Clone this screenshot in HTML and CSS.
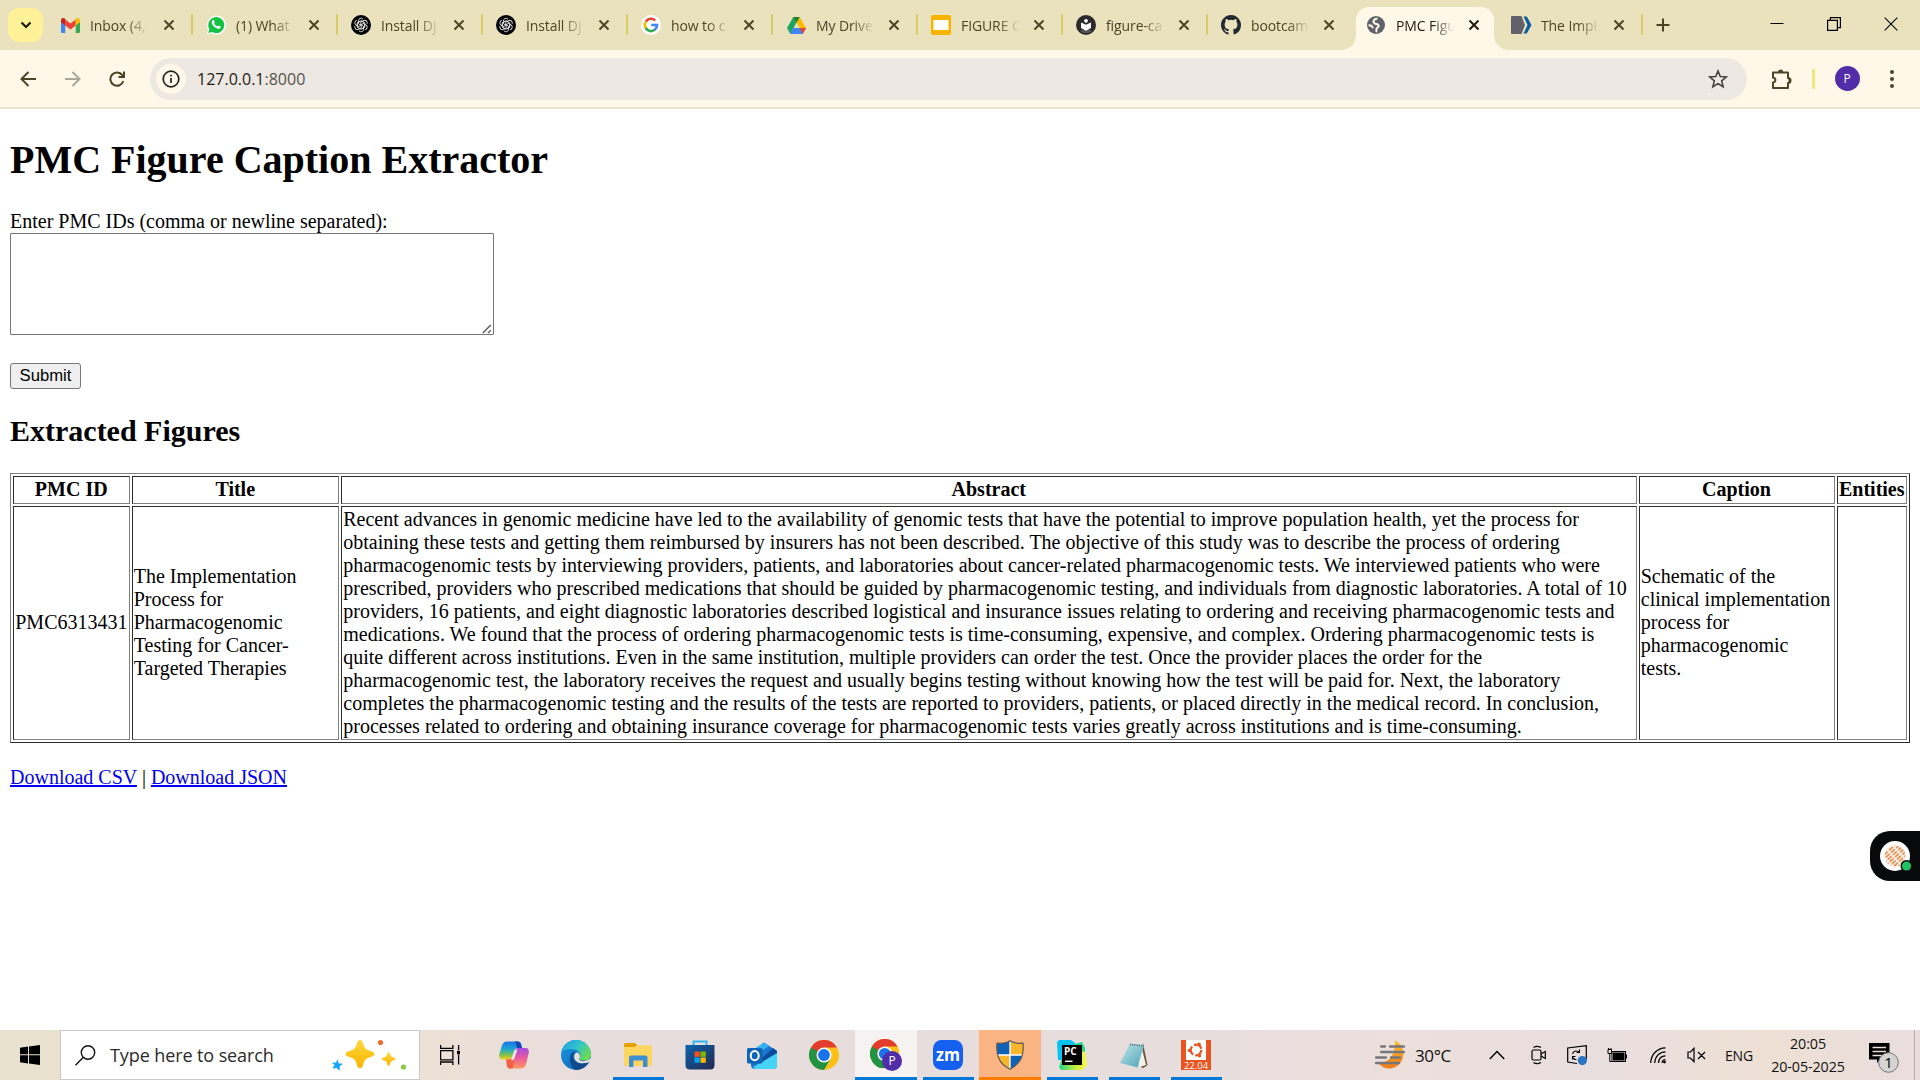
FILE: index.html
```html
<!DOCTYPE html>
<html lang="en">
<head>
<meta charset="utf-8">
<title>PMC Figure Caption Extractor</title>
<link rel="stylesheet" href="styles.css">
</head>
<body>
<svg class="defs" width="0" height="0" aria-hidden="true">
  <defs>
    <symbol id="close" viewBox="0 0 12 12"><path d="M1.5 1.5l9 9M10.500 1.500l-9 9" fill="none" stroke="currentColor" stroke-width="2"/></symbol>
    <symbol id="knot" viewBox="0 0 20 20">
      <circle cx="10" cy="10" r="10" fill="#000"/>
      <g fill="none" stroke="#e8e8e8" stroke-width=".9">
        <path id="petal" d="M10 10.2L7.4 8.700V5.800a2.600 2.600 0 0 1 4.600-1.600M7.400 7.300l2.700-1.600 3 1.700"/>
        <use href="#petal" transform="rotate(60 10 10)"/><use href="#petal" transform="rotate(120 10 10)"/>
        <use href="#petal" transform="rotate(180 10 10)"/><use href="#petal" transform="rotate(240 10 10)"/>
        <use href="#petal" transform="rotate(300 10 10)"/>
      </g>
    </symbol>
    <symbol id="chrome" viewBox="0 0 48 48">
      <circle cx="24" cy="24" r="24" fill="#fbc116"/>
      <path d="M24 24L3.200 12A24 24 0 0 0 24 48L34.400 30z" fill="#229342"/>
      <path d="M3.200 12A24 24 0 0 1 44.800 12H24L13.600 30z" fill="#e33b2e"/>
      <path d="M3.200 12L13.600 30 24 24z" fill="#229342"/>
      <circle cx="24" cy="24" r="12" fill="#fff"/><circle cx="24" cy="24" r="9.500" fill="#1a73e8"/>
    </symbol>
    <linearGradient id="gCop1" x1="0" y1="0" x2="0" y2="1"><stop offset="0" stop-color="#1b74e4"/><stop offset=".4" stop-color="#1aa3d8"/><stop offset=".7" stop-color="#6fbf5a"/><stop offset="1" stop-color="#f2cf12"/></linearGradient>
    <linearGradient id="gCop2" x1="0" y1="0" x2="0" y2="1"><stop offset="0" stop-color="#a34be0"/><stop offset=".5" stop-color="#ec5b9a"/><stop offset="1" stop-color="#fb9a5c"/></linearGradient>
    <linearGradient id="gEdge1" x1="0" y1="0" x2="1" y2=".6"><stop offset="0" stop-color="#2496dc"/><stop offset=".5" stop-color="#2cc2cf"/><stop offset="1" stop-color="#6bdc55"/></linearGradient>
    <linearGradient id="gEdge2" x1="0" y1="0" x2="1" y2="1"><stop offset="0" stop-color="#1a9be3"/><stop offset="1" stop-color="#0a5cb0"/></linearGradient>
    <linearGradient id="gStore" x1="0" y1="0" x2="1" y2="1"><stop offset="0" stop-color="#0a64ad"/><stop offset="1" stop-color="#26264f"/></linearGradient>
    <linearGradient id="gPc" x1="0" y1="0" x2="1" y2="0"><stop offset="0" stop-color="#21d789"/><stop offset=".6" stop-color="#c6ee3a"/><stop offset="1" stop-color="#fcf84a"/></linearGradient>
    <linearGradient id="gMoon" x1="0" y1="0" x2="0" y2="1"><stop offset="0" stop-color="#fbc02d"/><stop offset="1" stop-color="#f07a1c"/></linearGradient>
    <linearGradient id="gNote" x1="0" y1="0" x2="1" y2="1"><stop offset="0" stop-color="#c5e6ea"/><stop offset="1" stop-color="#4ba3b8"/></linearGradient>
    <linearGradient id="gStar" x1="0" y1="0" x2="0" y2="1"><stop offset="0" stop-color="#ffd83e"/><stop offset="1" stop-color="#f8b400"/></linearGradient>
    <pattern id="hatch" width="7" height="3" patternUnits="userSpaceOnUse" patternTransform="rotate(-42)"><rect width="6" height="1.900" rx=".9" fill="#e5965a"/></pattern>
  </defs>
</svg>

<header class="tabstrip">
  <button class="tab-search" aria-label="Search tabs"><svg width="12" height="8" viewBox="0 0 12 8"><path d="M1.500 1.500L6 6l4.500-4.500" fill="none" stroke="#1e1c0a" stroke-width="2.200"/></svg></button>
  <div class="tabs">
    <div class="tab first"><span class="fav"><svg width="19" height="15" viewBox="0 0 19 15"><path d="M0 2.500V13.500Q0 15 1.500 15H4.300V7z" fill="#4285f4"/><path d="M19 2.500V13.500Q19 15 17.500 15H14.700V7z" fill="#34a853"/><path d="M4.300 1.500L9.500 5.500 14.700 1.500V7.500L9.500 11.500 4.300 7.500z" fill="#ea4335"/><path d="M0 2.500C0 0 2.600-.6 4.300.9V7.500L0 4.200z" fill="#c5221f"/><path d="M19 2.500C19 0 16.400-.6 14.700.9V7.500L19 4.200z" fill="#fbbc04"/></svg></span><span class="label">Inbox (4,</span><svg class="x"><use href="#close"/></svg></div>
    <div class="tab"><span class="fav"><svg width="20" height="20" viewBox="0 0 20 20"><path d="M1 19.500L2.200 15A9.500 9.500 0 1 1 5.500 18.300z" fill="#fff"/><path d="M2.300 18.100l1.100-3.900a8 8 0 1 1 2.800 2.800z" fill="#13c143"/><path d="M6.700 5.200c.5-.5 1.100-.4 1.300.1l.7 1.600c.1.400-.6 1-.7 1.300.8 1.500 1.900 2.500 3.500 3.200.4-.1.900-1.100 1.300-.9l1.800.9c.4.300-.1 1.600-.8 2-1.100.6-2.500.3-4.600-1-1.800-1.200-3.300-3.200-3.500-4.700 0-1.100.4-2 1-2.500z" fill="#fff"/></svg></span><span class="label">(1) What</span><svg class="x"><use href="#close"/></svg></div>
    <div class="tab"><span class="fav"><svg width="20" height="20"><use href="#knot"/></svg></span><span class="label">Install Dj</span><svg class="x"><use href="#close"/></svg></div>
    <div class="tab"><span class="fav"><svg width="20" height="20"><use href="#knot"/></svg></span><span class="label">Install Dj</span><svg class="x"><use href="#close"/></svg></div>
    <div class="tab"><span class="fav"><svg width="20" height="20" viewBox="0 0 20 20"><circle cx="10" cy="10" r="10" fill="#fff"/><g fill="none" stroke-width="2.600"><path d="M4.800 6.600A6 6 0 0 1 14.200 5.600" stroke="#ea4335"/><path d="M4.800 13.200A6 6 0 0 1 4.800 6.700" stroke="#fbbc05"/><path d="M13.900 14.600A6 6 0 0 1 4.700 13" stroke="#34a853"/><path d="M10.200 10H16A6 6 0 0 1 13.800 14.700" stroke="#4285f4"/></g></svg></span><span class="label">how to c</span><svg class="x"><use href="#close"/></svg></div>
    <div class="tab"><span class="fav"><svg width="19" height="17" viewBox="0 0 19 17"><path d="M6.300 0H9.500L9.500 5.500 3.300 17 0 11z" fill="#1fa463"/><path d="M6.300 0H12.700L19 11H12.700z" fill="#ffba00"/><path d="M6.300 0H12.700L9.500 5.600z" fill="#188038"/><path d="M6.200 11H19L15.700 17H3.200z" fill="#4285f4"/><path d="M15.700 17L12.700 11H19z" fill="#ea4335"/></svg></span><span class="label">My Drive</span><svg class="x"><use href="#close"/></svg></div>
    <div class="tab"><span class="fav"><svg width="20" height="20" viewBox="0 0 20 20"><rect width="20" height="20" rx="2" fill="#f7b500"/><rect x="2.500" y="5" width="15" height="10" fill="#fff"/></svg></span><span class="label">FIGURE C</span><svg class="x"><use href="#close"/></svg></div>
    <div class="tab"><span class="fav"><svg width="20" height="20" viewBox="0 0 20 20"><circle cx="10" cy="10" r="10" fill="#2b2b2e"/><path d="M4 16Q10 12 16 16A9 9 0 0 1 4 16z" fill="#555"/><circle cx="10" cy="5.800" r="1.900" fill="#fff"/><path d="M5 7.500L10 9.800 15 7.500V13L10 15.700 5 13z" fill="#fff"/></svg></span><span class="label">figure-ca</span><svg class="x"><use href="#close"/></svg></div>
    <div class="tab"><span class="fav"><svg width="20" height="20" viewBox="0 0 16 16"><path fill="#24292f" d="M8 0C3.580 0 0 3.580 0 8c0 3.540 2.290 6.530 5.470 7.590.4.070.55-.17.55-.38 0-.19-.01-.82-.01-1.490-2.010.37-2.530-.49-2.690-.94-.09-.23-.48-.94-.82-1.130-.28-.15-.68-.52-.01-.53.63-.01 1.080.58 1.230.82.72 1.210 1.870.87 2.330.66.07-.52.28-.87.51-1.070-1.780-.2-3.640-.89-3.640-3.950 0-.87.31-1.590.82-2.150-.08-.2-.36-1.020.08-2.120 0 0 .67-.21 2.200.82a7.600 7.600 0 0 1 4 0c1.530-1.040 2.200-.82 2.200-.82.44 1.100.16 1.920.08 2.120.51.56.82 1.270.82 2.150 0 3.070-1.870 3.750-3.650 3.950.29.25.54.73.54 1.480 0 1.070-.01 1.930-.01 2.200 0 .21.15.46.55.38A8 8 0 0 0 16 8c0-4.420-3.580-8-8-8z"/></svg></span><span class="label">bootcam</span><svg class="x"><use href="#close"/></svg></div>
    <div class="tab active"><span class="fav"><svg width="18" height="18" viewBox="0 0 18 18"><circle cx="9" cy="9" r="9" fill="#5f6368"/><path d="M10.500 2.500C6.500 2.800 5.500 5.500 7.500 7.300c1.500 1 3.800.2 4.200 2.200.2 1.700-2 2-2.200 3.300-.2 1.300.3 2.200-.5 3.200" fill="none" stroke="#fff8e9" stroke-width="2.100"/><path d="M1.500 9.300c2.500 0 4.200.8 4.200 3" fill="none" stroke="#fff8e9" stroke-width="1.900"/></svg></span><span class="label">PMC Figu</span><svg class="x"><use href="#close"/></svg></div>
    <div class="tab last"><span class="fav"><svg width="21" height="18" viewBox="0 0 21 18"><path d="M1 0H10.500L14 9 10.500 18H1Q0 18 0 17V1Q0 0 1 0z" fill="#616269"/><path d="M12.500.5L16.500 9 12.500 17.500H15.800L20.500 9 15.800.5z" fill="#0b5ba5"/></svg></span><span class="label">The Impl</span><svg class="x"><use href="#close"/></svg></div>
  </div>
  <button class="new-tab" aria-label="New tab"><svg width="14" height="14" viewBox="0 0 14 14"><path d="M7 .5v13M.5 7h13" stroke="#4a4625" stroke-width="2"/></svg></button>
  <div class="win-controls">
    <span><svg width="14" height="14" viewBox="0 0 14 14"><path d="M.5 6.500h13" stroke="#000"/></svg></span>
    <span><svg width="14" height="14" viewBox="0 0 14 14" fill="none" stroke="#000" stroke-width="1.200"><path d="M.6 3.400h9.800v10H.6zM3.400 3V.6h10v10h-2.800"/></svg></span>
    <span><svg width="14" height="14" viewBox="0 0 14 14"><path d="M.7.7l12.600 12.600M13.300.7L.7 13.300" stroke="#000" stroke-width="1.100"/></svg></span>
  </div>
</header>

<nav class="toolbar">
  <div class="nav-buttons">
    <svg width="16" height="16" viewBox="0 0 16 16" fill="none" stroke="#4a4625" stroke-width="2"><path d="M16 8H1.500M8.500 1L1.500 8l7 7"/></svg>
    <svg width="16" height="16" viewBox="0 0 16 16" fill="none" stroke="#aaa794" stroke-width="2"><path d="M0 8h14.500M7.500 1l7 7-7 7"/></svg>
    <svg width="16" height="16" viewBox="0 0 16 16" fill="none" stroke="#4a4625" stroke-width="2"><path d="M14.300 10A6.600 6.600 0 1 1 13.300 4.200L14.500 5.500M15 .5V6H9.500"/></svg>
  </div>
  <div class="omnibox">
    <span class="info"><svg width="18" height="18" viewBox="0 0 18 18"><circle cx="9" cy="9" r="7.800" fill="none" stroke="#222" stroke-width="1.700"/><path d="M9 8v5M9 4.800v1.700" stroke="#222" stroke-width="1.700"/></svg></span>
    <span class="url">127.0.0.1<i>:8000</i></span>
    <svg width="20" height="20" viewBox="0 0 20 20"><path d="M10 2l2.300 5.500 5.900.5-4.500 3.900 1.400 5.800L10 14.600l-5.100 3.100 1.400-5.800L1.800 8l5.900-.5z" fill="none" stroke="#45433a" stroke-width="1.600"/></svg>
  </div>
  <svg class="ext" width="22" height="22" viewBox="0 0 22 22"><path d="M2 4.500h15v5.500a1 1 0 0 1 0 5v5H2v-5.500c3.200-.5 3.200-4.300 0-5z" fill="none" stroke="#4a4625" stroke-width="2" stroke-linejoin="round"/><path d="M7 4a2.600 2.600 0 0 1 5.200 0zM17.500 10a2.500 2.500 0 0 1 0 5z" fill="#4a4625"/></svg>
  <span class="divider"></span>
  <span class="avatar">P</span>
  <svg class="menu" width="6" height="20" viewBox="0 0 6 20" fill="#4a4625"><circle cx="3" cy="3" r="2"/><circle cx="3" cy="10" r="2"/><circle cx="3" cy="17" r="2"/></svg>
</nav>

<main class="page">
  <h1>PMC Figure Caption Extractor</h1>
  <form>
    <label for="ids">Enter PMC IDs (comma or newline separated):</label>
    <div class="field">
      <textarea id="ids"></textarea>
      <svg class="grip" width="10" height="10" viewBox="0 0 10 10"><path d="M.8 9L8.800 1M6 9l2.800-2.800" stroke="#555" stroke-width="1.300"/></svg>
    </div>
    <button type="button" class="submit">Submit</button>
  </form>
  <h2>Extracted Figures</h2>
  <table class="figures">
    <colgroup><col class="c-id"><col class="c-title"><col class="c-abstract"><col class="c-caption"><col></colgroup>
    <thead><tr><th>PMC ID</th><th>Title</th><th>Abstract</th><th>Caption</th><th>Entities</th></tr></thead>
    <tbody><tr>
      <td>PMC6313431</td>
      <td>The Implementation Process for Pharmacogenomic Testing for Cancer-Targeted Therapies</td>
      <td>Recent advances in genomic medicine have led to the availability of genomic tests that have the potential to improve population health, yet the process for obtaining these tests and getting them reimbursed by insurers has not been described. The objective of this study was to describe the process of ordering pharmacogenomic tests by interviewing providers, patients, and laboratories about cancer-related pharmacogenomic tests. We interviewed patients who were prescribed, providers who prescribed medications that should be guided by pharmacogenomic testing, and individuals from diagnostic laboratories. A total of 10 providers, 16 patients, and eight diagnostic laboratories described logistical and insurance issues relating to ordering and receiving pharmacogenomic tests and medications. We found that the process of ordering pharmacogenomic tests is time-consuming, expensive, and complex. Ordering pharmacogenomic tests is quite different across institutions. Even in the same institution, multiple providers can order the test. Once the provider places the order for the pharmacogenomic test, the laboratory receives the request and usually begins testing without knowing how the test will be paid for. Next, the laboratory completes the pharmacogenomic testing and the results of the tests are reported to providers, patients, or placed directly in the medical record. In conclusion, processes related to ordering and obtaining insurance coverage for pharmacogenomic tests varies greatly across institutions and is time-consuming.</td>
      <td>Schematic of the clinical implementation process for pharmacogenomic tests.</td>
      <td></td>
    </tr></tbody>
  </table>
  <p class="downloads"><a href="#">Download CSV</a> | <a href="#">Download JSON</a></p>
  <div class="floater">
    <svg width="34" height="34" viewBox="0 0 34 34"><circle cx="15" cy="15" r="15" fill="#fff"/><circle cx="15" cy="15" r="10.500" fill="url(#hatch)"/><circle cx="26.500" cy="25" r="6" fill="#08090b"/><circle cx="26.500" cy="25" r="4.600" fill="#21c063"/></svg>
  </div>
</main>

<footer class="taskbar">
  <span class="start"><svg width="20" height="20" viewBox="0 0 20 20"><path d="M0 2.700L8 1.600V9.300H0zM9 1.400L20 0V9.300H9zM0 10.300H8V18.400L0 17.300zM9 10.300H20V20L9 18.500z"/></svg></span>
  <div class="search">
    <svg width="21" height="21" viewBox="0 0 21 21" fill="none" stroke="#111" stroke-width="1.400"><circle cx="13" cy="7.500" r="6.700"/><path d="M8.300 12.300L.5 20.200"/></svg>
    <span>Type here to search</span>
    <svg class="sparkles" width="78" height="32" viewBox="0 0 78 32"><path id="spark" d="M30 1c2 0 2.500 1 3.300 4 1 3.500 2 5 6 6.500 4.500 1.600 5 2 5 3.500s-.5 1.900-5 3.500c-4 1.500-5 3-6 6.500-.8 3-1.300 4-3.300 4s-2.500-1-3.300-4c-1-3.500-2-5-6-6.500-4.500-1.600-5-2-5-3.500s.5-1.900 5-3.500c4-1.500 5-3 6-6.500.8-3 1.300-4 3.300-4z" fill="url(#gStar)"/><use href="#spark" transform="translate(44.500 12.900) scale(.47)"/><path d="M7.500 20.500c.8.300.6 3.500 1.400 3.900s3.600-.2 3.600.7-2.600 1.400-2.800 2.400.5 3.700-.4 3.800-1.700-2.200-2.800-2.300-3.300 1.200-3.700.3 1.700-2.100 1.700-3.200-2.500-1.500-2.200-2.300 3 .2 3.800-.3.700-3.200 1.400-3z" fill="#12a5f0"/><circle cx="50.500" cy="3.500" r="2.600" fill="#ee6a2c"/><circle cx="73.500" cy="28" r="2.600" fill="#8ccb3f"/></svg>
  </div>
  <span class="taskview"><svg width="20" height="20" viewBox="0 0 20 20" fill="none" stroke="#000" stroke-width="1.300"><path d="M.6 0v3.300h12.300V0M.6 5.700h12.300v9.200H.6zM.6 20v-3h12.300v3M18.600 0v5M18.600 10v9.500"/><path d="M17 5.800h3.200v3.600H17z" fill="#000" stroke="none"/></svg></span>
  <div class="apps">
    <span class="app"><svg width="30" height="28" viewBox="0 0 30 28"><path d="M8 .5H19q2.500 0 3 2.500l1 4h-5q-2 0-2.700 2.500l-2 6q-1 3-4 3H3.500Q-.5 18 .3 13L3 4.500Q4.300.5 8 .5z" fill="url(#gCop1)"/><path d="M15.500.5H19q2.500 0 3 2.500l1 4h-5l-1-4q-.5-2.500-1.500-2.500z" fill="#1d43b8"/><path d="M22 27.500H11q-2.500 0-3-2.500l-.8-6.500H10q3 0 4-3l2-6Q16.700 7 18.500 7H26.500Q30.500 7 29.700 12L27 23.500q-1.300 4-5 4z" fill="url(#gCop2)"/><path d="M7.200 18.500H10q2.500 0 3.500-2l1.600 4.500-1.600 6.500H11q-2.500 0-3-2.500z" fill="#f16143"/><path d="M18.500 8.500L15 18.200q-.5 1-2 1h-.8L15 10.500q.5-2 3.500-2z" fill="#eee6e6"/></svg></span>
    <span class="app"><svg width="30" height="30" viewBox="0 0 30 30"><circle cx="15" cy="15" r="15" fill="url(#gEdge2)"/><path d="M.3 12A15 15 0 0 1 30 14.500c0 4-3 6-6.500 6-4 0-5.500-1.500-5-2.500 2-3 .5-7-4.500-8.500C8 8 2.500 9.500.3 12z" fill="url(#gEdge1)"/><path d="M9 18c0-4 2.500-7 6-6-3 1.500-4 6-1 9 3.500 3.500 9 2.500 14 1-3 5-8 8-13 8-4-1-6-7-6-12z" fill="#124a8c"/><path d="M18.500 18c-1.500 2 2 4.500 7 2.500 2-.8 3.500-1.500 5-3l-2 4.500c-5 2-11 2-14-1.500-2.500-3-1-8 1.500-8 3 .8 3.500 4 2.500 5.500z" fill="#e8dfde"/></svg></span>
    <span class="app running"><svg width="28" height="24" viewBox="0 0 28 24"><path d="M0 1.500Q0 0 1.500 0H11l2.500 2.300L11 4H0z" fill="#e6a100"/><path d="M0 4H10.500L13 2.200H26.500Q28 2.200 28 3.700V21.500Q28 23 26.500 23H1.500Q0 23 0 21.500z" fill="#ffd660"/><path d="M5 24V14.500Q5 12.500 7 12.500H21.500Q23.500 12.500 23.500 14.500V24H19V17.500H9.500V24z" fill="#3d8fd1"/></svg></span>
    <span class="app"><svg width="30" height="30" viewBox="0 0 30 30"><path d="M8.500 6V1.500H21.500V6" fill="none" stroke="#30b7f0" stroke-width="2"/><path d="M.5 5H29.500V25Q29.500 29.500 25 29.500H5Q.5 29.500 .5 25z" fill="url(#gStore)"/><path d="M9.500 11.500h5.300v5.300H9.500z" fill="#f25022"/><path d="M15.500 11.500h5.300v5.300h-5.300z" fill="#7fba00"/><path d="M9.500 17.500h5.300v5.300H9.500z" fill="#00a4ef"/><path d="M15.500 17.500h5.300v5.300h-5.300z" fill="#ffb900"/></svg></span>
    <span class="app"><svg width="30" height="27" viewBox="0 0 30 27"><path d="M4 10L17 .5 30 9V23Q30 27 26 27H8Q4 27 4 23z" fill="#1a78cc"/><path d="M4 9L17 .5 22 4 9 13z" fill="#35b1ee"/><path d="M30 9V12L15 22V16L26 6z" fill="#0b4a9c"/><path d="M15 20L30 11V23Q30 27 26 27H8L6 25z" fill="#45d3f8"/><rect y="6" width="15.500" height="15.500" rx="1.500" fill="#0f64b8"/><ellipse cx="7.700" cy="13.700" rx="4" ry="4.600" fill="none" stroke="#fff" stroke-width="2"/></svg></span>
    <span class="app"><svg width="30" height="30"><use href="#chrome"/></svg></span>
    <span class="app running focus"><svg width="32" height="32" viewBox="0 0 32 32"><svg width="29.500" height="29.500"><use href="#chrome"/></svg><circle cx="22" cy="22" r="10" fill="#512da8"/><text x="22" y="26.200" text-anchor="middle" class="badge-p">P</text></svg></span>
    <span class="app running"><svg width="30" height="30" viewBox="0 0 30 30"><rect width="30" height="30" rx="8.500" fill="#1660f0"/><text x="15" y="20.500" text-anchor="middle" class="zm" textLength="24" lengthAdjust="spacingAndGlyphs">zm</text></svg></span>
    <span class="app running alert"><svg width="28" height="30" viewBox="0 0 28 30"><path d="M14 .8C11 3 6 3.600 1 3.200 0 14 2 23 14 29.200 26 23 28 14 27 3.200 22 3.600 17 3 14 .8z" fill="#f8b62b"/><path d="M14 .8C11 3 6 3.600 1 3.200.7 7.500.8 11.500 2 15H14z" fill="#0d62b8"/><path d="M14 15H26C24.500 21 21 25.600 14 29.200z" fill="#0d62b8"/><path d="M14 1V29M1.500 15H26.500" stroke="#fff" stroke-width="1.300"/><path d="M14 .8C11 3 6 3.600 1 3.200 0 14 2 23 14 29.200 26 23 28 14 27 3.200 22 3.600 17 3 14 .8z" fill="none" stroke="#5c5a55" stroke-width="1.200"/></svg></span>
    <span class="app running"><svg width="30" height="30" viewBox="0 0 30 30"><path d="M0 2L2 0H14L18 3V18L6 20H1z" fill="#07c3f2"/><path d="M17 4L25 2 28 8V14H18z" fill="#21d789"/><path d="M5 18L24 11 28 12 30 25 25 30H4L2 27z" fill="url(#gPc)"/><rect x="5" y="5" width="20" height="20" fill="#000"/><text x="7" y="14.800" class="pc">PC</text><path d="M8 21.300h7.500" stroke="#fff" stroke-width="1.400"/></svg></span>
    <span class="app running"><svg width="28" height="27" viewBox="0 0 28 27"><path d="M23 1L27.500 23 23.500 26 18 24z" fill="#6d5a3c"/><path d="M21 3L26 23 18 25.500z" fill="#f3f3ee"/><path d="M10 1.500L24 3 17.500 25.500 0 21z" fill="url(#gNote)"/><path d="M10 2.500L24 4" stroke="#687a80" stroke-width="1.800" stroke-dasharray="1.200 1"/></svg></span>
    <span class="app running"><svg width="30" height="30" viewBox="0 0 30 30"><rect width="30" height="30" fill="#e95420"/><rect x="5" width="20" height="20" fill="#fff"/><circle cx="15" cy="10" r="5.300" fill="none" stroke="#e95420" stroke-width="2.200" stroke-dasharray="9 2.100"/><circle cx="8.500" cy="10.500" r="1.800" fill="#e95420"/><circle cx="18" cy="4.300" r="1.800" fill="#e95420"/><circle cx="18.500" cy="15.800" r="1.800" fill="#e95420"/><text x="15" y="29.200" text-anchor="middle" class="ver">22.04</text></svg></span>
  </div>
  <div class="tray">
    <span class="weather"><svg width="30" height="30" viewBox="0 0 30 30"><path d="M20 .5C28 4 31 14 26 22 21 30 9 31 3.500 23 12 24 21 16 20 .5z" fill="url(#gMoon)"/><path d="M6 6.500h4M15 6.500h14M6 12h23M1 17.500h10M16 17.500h9M1 23h23" stroke="#77767a" stroke-width="2.300" stroke-linecap="round"/></svg></span>
    <span class="temp">30°C</span>
    <svg class="t-caret" width="16" height="10" viewBox="0 0 16 10"><path d="M.8 9L8 1.500 15.200 9" fill="none" stroke="#000" stroke-width="1.400"/></svg>
    <svg class="t-cam" width="16" height="20" viewBox="0 0 16 20" fill="none" stroke="#000" stroke-width="1.200"><rect x="1" y="5" width="9" height="10" rx="1.500"/><path d="M10 9l4.300-2.500v7L10 11M2.500 2.500Q6 .3 10 2.500M2.500 17.500Q6 19.700 10 17.500"/></svg>
    <svg class="t-upd" width="20" height="20" viewBox="0 0 20 20"><path d="M10 18.500L.7 17V3L19.300.7V14" fill="none" stroke="#000" stroke-width="1.200"/><path d="M5.500 9a4 4 0 0 1 7-1.500M12.500 4.500v3h-3M5.500 14.500v-3h3M5.500 12a4 4 0 0 0 4 2.500" fill="none" stroke="#000" stroke-width="1.100"/><circle cx="15.300" cy="15.500" r="4.600" fill="#2b74c0"/></svg>
    <svg class="t-bat" width="20" height="15" viewBox="0 0 20 15"><path d="M1 1.500h3.500v4H1zM1.600 0v1.500M4 0v1.500M2.800 5.500V13.500H5" fill="none" stroke="#000"/><rect x="5" y="3.500" width="13.500" height="10" fill="none" stroke="#000"/><rect x="6" y="4.500" width="11.500" height="8"/><path d="M19 6.500h1v4h-1z"/></svg>
    <svg class="t-wifi" width="17" height="17" viewBox="0 0 17 17" fill="none" stroke="#000" stroke-width="1.200"><path d="M.7 16C1 7.500 7 1 15.500.8"/><path d="M4.700 16C5 9.500 9 5 15.500 4.800"/><path d="M8.500 16C8.700 11.500 11 9 15.500 8.800"/><path d="M12 16c.2-2 1.500-3.400 3.500-3.500"/><circle cx="14.500" cy="15" r="1.400" fill="#000" stroke="none"/></svg>
    <svg class="t-vol" width="19" height="16" viewBox="0 0 19 16" fill="none" stroke="#000" stroke-width="1.200"><path d="M1 5h2.500L7 1.300v13.400L3.500 11H1zM11 5l7 7M18 5l-7 7"/></svg>
    <span class="lang">ENG</span>
    <span class="clock"><span>20:05</span><span>20-05-2025</span></span>
    <svg class="t-note" width="31" height="31" viewBox="0 0 31 31"><path d="M0 1H20.500V17.500H11L8 21V17.500H0z"/><path d="M3.500 5.500H17M3.500 9.500H17M3.500 13.500H13" stroke="#e8dfdc" stroke-width="1.300"/><circle cx="19.500" cy="20.500" r="9.800" fill="#d6d4d3" stroke="#77767a"/><text x="19.500" y="26" text-anchor="middle" class="count">1</text></svg>
    <span class="peek"></span>
  </div>
</footer>
</body>
</html>
```

FILE: styles.css
```css
* { box-sizing: border-box; }
body {
  margin: 0;
  width: 1920px;
  height: 1080px;
  overflow: hidden;
  display: flex;
  flex-direction: column;
  background: #fff;
  font-family: "Open Sans", "Noto Sans", sans-serif;
  color: #000;
}
svg { display: block; flex: none; }
button { border: 0; padding: 0; background: none; }

/* tab strip */
.tabstrip {
  flex: none;
  height: 50px;
  display: flex;
  align-items: flex-start;
  padding-left: 8px;
  background: #eae2bd;
}
.tab-search {
  width: 35px;
  height: 34px;
  margin: 8px 5px 0 0;
  display: flex;
  align-items: center;
  justify-content: center;
  border-radius: 11px;
  background: #fef198;
}
.tabs { display: flex; flex: none; }
.tab {
  position: relative;
  width: 145px;
  height: 50px;
  padding: 0 18px 0 12px;
  display: flex;
  align-items: center;
  font-size: 14px;
  color: #4a4625;
}
.tab.first { padding-left: 11px; }
.tab::after {
  content: "";
  position: absolute;
  right: 0;
  top: 14px;
  width: 2.5px;
  height: 21px;
  border-radius: 1px;
  background: #d8cb66;
}
.fav { width: 22px; height: 20px; display: flex; align-items: center; justify-content: center; }
.label {
  width: 63px;
  margin-left: 9px;
  white-space: nowrap;
  letter-spacing: -0.1px;
  -webkit-mask-image: linear-gradient(90deg, #000 58%, transparent 93%);
  mask-image: linear-gradient(90deg, #000 58%, transparent 93%);
}
.x { width: 12px; height: 12px; margin-left: auto; }
.tab.active {
  width: 138px;
  height: 43px;
  margin: 7px 4px 0 3px;
  padding: 0 14px 7px 9px;
  border-radius: 13px 13px 0 0;
  background: #fff8e9;
  color: #1e1c0a;
}
.tab.active::before, .tab.active::after {
  content: "";
  position: absolute;
  top: auto;
  bottom: 0;
  width: 14px;
  height: 14px;
  border-radius: 0;
}
.tab.active::before { left: -14px; background: radial-gradient(circle at 0 0, transparent 13.5px, #fff8e9 14px); }
.tab.active::after { right: -14px; background: radial-gradient(circle at 100% 0, transparent 13.5px, #fff8e9 14px); }
.tab:has(+ .active)::after { display: none; }
.new-tab { width: 14px; height: 14px; margin: 18px 0 0 13px; }
.win-controls { display: flex; margin: 0 1px 0 auto; }
.win-controls span { width: 57px; height: 48px; display: flex; align-items: center; justify-content: center; }

/* address bar */
.toolbar {
  flex: none;
  height: 59px;
  padding: 0 25px 0 20px;
  display: flex;
  align-items: center;
  background: #fff8e9;
  border-bottom: 2px solid #ebe4d2;
}
.nav-buttons { display: flex; gap: 28.5px; width: 130px; }
.omnibox {
  width: 1597px;
  height: 42px;
  padding: 0 19px 0 6px;
  display: flex;
  align-items: center;
  border-radius: 21px;
  background: #ede8e1;
}
.info { width: 30px; height: 30px; display: flex; align-items: center; justify-content: center; border-radius: 50%; background: #fff8e9; }
.url { flex: 1; margin-left: 11px; font-size: 16px; color: #1e1c17; }
.url i { font-style: normal; color: #55524b; }
.ext { margin-left: 24px; }
.divider { width: 2.5px; height: 20px; margin: 0 20px 0 19px; background: #f3e57b; border-radius: 1px; }
.avatar { width: 25px; height: 25px; display: flex; align-items: center; justify-content: center; border-radius: 50%; background: #512da8; color: #fff; font-size: 12px; }
.menu { margin-left: auto; }

/* web page */
.page {
  position: relative;
  flex: 1;
  padding: 0 10px;
  font-family: "Liberation Serif", "Times New Roman", serif;
  font-size: 20px;
  line-height: 23px;
}
h1 { margin: 28px 0 27px; font-size: 40px; line-height: 46px; }
form { display: flex; flex-direction: column; align-items: flex-start; }
.field { position: relative; width: 484px; height: 102px; }
textarea {
  display: block;
  width: 100%;
  height: 100%;
  border: 1px solid #767676;
  border-radius: 1px;
  background: #fff;
  resize: none;
}
.grip { position: absolute; right: 2px; bottom: 1px; }
.submit {
  width: 71px;
  height: 26px;
  margin-top: 28px;
  border: 1px solid #767676;
  border-radius: 3px;
  background: #efefef;
  color: #000;
  font: 16.67px "Liberation Sans", Arial, sans-serif;
}
h2 { margin: 25px 0; font-size: 30px; line-height: 34px; }
.figures {
  width: 1900px;
  table-layout: fixed;
  border: 1px solid;
  border-color: #808080 #2c2c2c #2c2c2c #808080;
  border-spacing: 2.5px;
}
.figures th, .figures td {
  padding: 1.25px;
  border: 1px solid;
  border-color: #2c2c2c #808080 #808080 #2c2c2c;
}
.figures td { text-align: left; vertical-align: middle; }
.c-id { width: 116.5px; }
.c-title { width: 207.5px; }
.c-abstract { width: 1295.5px; }
.c-caption { width: 196px; }
.downloads { margin: 23px 0 0; }
.downloads a { color: #0000ee; }
.floater {
  position: absolute;
  right: 0;
  top: 722px;
  width: 50px;
  height: 50px;
  padding: 10px 0 0 10px;
  border-radius: 20px 0 0 20px;
  background: #08090b;
}

/* taskbar */
.taskbar {
  flex: none;
  height: 50px;
  display: flex;
  align-items: stretch;
  background: linear-gradient(90deg, #e8e1cd 0, #ebe2d3 400px, #ecdfd8 470px, #e7dddd 600px, #e7dddd 1200px, #ecdfdc 1400px, #e8dede 1600px, #eee0d4 1770px, #e9dedd 1900px);
}
.start { width: 60px; display: flex; align-items: center; justify-content: center; }
.search {
  width: 360px;
  border: 1px solid #c8c8c8;
  background: #fff;
  display: flex;
  align-items: center;
  padding: 0 11px 0 14px;
  font-size: 18px;
  letter-spacing: -0.1px;
  color: #2b2b2b;
}
.search span { margin-left: 14px; white-space: nowrap; }
.sparkles { margin-left: auto; }
.taskview { width: 63px; padding-left: 20px; display: flex; align-items: center; }
.apps { display: flex; flex: none; }
.app { position: relative; width: 62px; display: flex; align-items: center; justify-content: center; }
.running::after { content: ""; position: absolute; left: 6px; right: 5px; bottom: 0; height: 3px; background: #0078d7; }
.focus { background: #f6f2f1; }
.alert { background: #fab483; }
.focus::after { left: 0; right: 0; }
.alert::after { left: 0; right: 0; background: #ff7a00; }
.badge-p { font: 12px "Open Sans", sans-serif; fill: #fff; }
.zm { font: 700 17px "Open Sans", sans-serif; fill: #fff; }
.pc { font: 700 10px "Open Sans", sans-serif; fill: #fff; }
.ver { font: 9.5px "Open Sans", sans-serif; fill: #fff; }
.count { font: 15px "Open Sans", sans-serif; fill: #000; }
.tray { flex: 1; display: flex; align-items: center; font-size: 14.5px; color: #111; }
.weather { margin-left: 148px; }
.temp { width: 74px; margin-left: 10px; font-size: 17px; letter-spacing: -0.4px; white-space: nowrap; }
.t-cam { margin-left: 26px; }
.t-upd { margin-left: 20px; }
.t-bat { margin-left: 20px; }
.t-wifi { margin-left: 23px; }
.t-vol { margin-left: 20px; }
.lang { width: 30px; margin-left: 19px; font-size: 14px; letter-spacing: -0.2px; }
.clock { width: 80px; margin-left: 13px; display: flex; flex-direction: column; align-items: center; line-height: 23px; font-size: 14.3px; letter-spacing: -0.1px; white-space: nowrap; }
.t-note { margin: 4px 0 0 21px; }
.peek { width: 1px; height: 50px; margin-left: 14px; background: #b5adab; }
```
